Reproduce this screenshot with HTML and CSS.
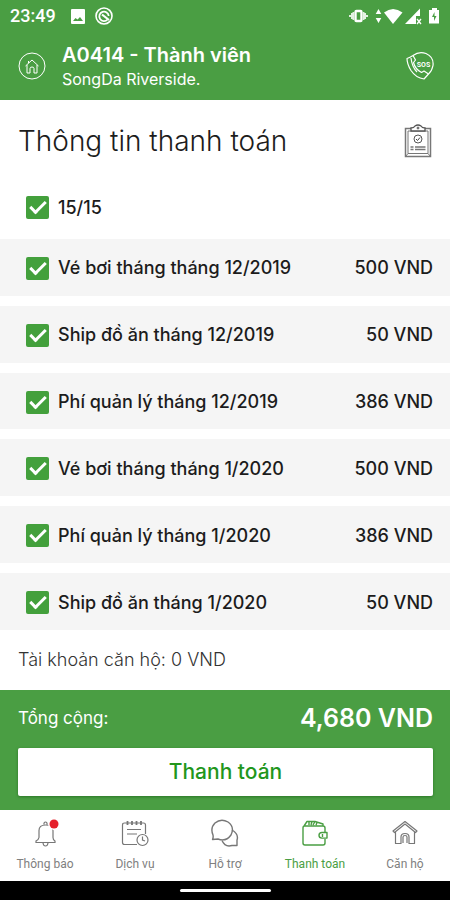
FILE: index.html
```html
<!DOCTYPE html>
<html lang="vi">
<head>
<meta charset="utf-8">
<meta name="viewport" content="width=device-width, initial-scale=1">
<title>Thông tin thanh toán</title>
<link rel="stylesheet" href="styles.css">
</head>
<body>
<header class="top">
  <div class="status">
    <span class="clock">23:49</span>
    <svg class="status-photo" width="14" height="15" viewBox="0 0 14 15"><rect width="14" height="15" rx="1" fill="#fff"/><path d="M2 12l2.500-3 2 1.500 2.500-2.500 3 4z" fill="#4a9e43"/></svg>
    <svg class="status-app" width="18" height="18" viewBox="0 0 18 18" fill="none" stroke="#fff"><circle cx="9" cy="9" r="8" stroke-width="1.600"/><path d="M12.500 12.500A4.700 4.700 0 1 1 13.700 9" stroke-width="1.800"/><path d="M7 7.500l7 5.500" stroke-width="2.200"/></svg>
    <svg class="status-right" width="94" height="18" viewBox="0 0 94 18" fill="#fff">
      <path d="M4.500 5H6v8H4.500zM3 6h1.500v6H3zM1 8h2v2H1zM15 5h1.500v8H15zM16.500 6H18v6h-1.500zM18 8h2v2h-2z" opacity=".85"/>
      <rect x="7.500" y="4" width="6" height="10" rx="1" fill="none" stroke="#fff" stroke-width="2.400"/>
      <path d="M30.500 2l2.800 5h-5.600zM30.500 16l2.800-5h-5.600z"/>
      <path d="M36 5.500Q45 -1.500 54.500 5.500L45 17z"/>
      <path d="M57 17L72 1.500V9h-4v8z"/><path d="M69 12l4 5M73 12l-4 5" stroke="#fff" stroke-width="1.300"/>
      <path d="M81 3h3V1h5v2h2v13.500H81z"/><path d="M86.500 5l-2.500 5h2v4l2.500-5h-2z" fill="#4a9e43"/>
    </svg>
  </div>
  <div class="account">
    <a class="icon-link" href="#home" aria-label="Trang chủ">
      <svg width="28" height="28" viewBox="0 0 28 28" fill="none" stroke="#fff" stroke-width="1"><circle cx="14" cy="14" r="13"/><path d="M7.500 14L14 8l6.500 6M9 13v8h3v-4.500q0-1.500 2-1.500t2 1.500V21h3v-8M10.500 11V9"/></svg>
    </a>
    <div class="who"><h1>A0414 - Thành viên</h1><p>SongDa Riverside.</p></div>
    <a class="icon-link" href="#sos" aria-label="Gọi khẩn cấp">
      <svg width="28" height="28" viewBox="0 0 28 28" fill="none" stroke="#fff" stroke-width="1.200" stroke-linejoin="round"><path d="M7 3.500Q13-1 20 1.500Q28 5 27 13.500Q26 19 22.500 22L18 27Q10 26 5 18.500Q1 12 1 6.500Q4 5.500 7 3.500z"/><path d="M7 3.500l2.500 4.500-2 2.500Q9 17 15.500 20.500L18 19l4.500 3M5 6q1 9 6 14"/><text x="17.500" y="15" text-anchor="middle" class="sos-text">SOS</text></svg>
    </a>
  </div>
</header>
<main>
  <div class="heading">
    <h2>Thông tin thanh toán</h2>
    <a class="icon-link" href="#history" aria-label="Lịch sử thanh toán">
      <svg width="28" height="34" viewBox="0 0 28 34" fill="none" stroke="#777"><path d="M1.500 4.500h25v28h-25z" stroke-width="1.500"/><path d="M4 7h20v22.500H4zM1.500 32.500L4 29.500M26.500 32.500l-2.500-3"/><path d="M7 7V4q3 0 4-2 3-2 6 0 1 2 4 2v3z" fill="#fff" stroke="#555" stroke-width="1.300"/><circle cx="14" cy="4" r="1" fill="#444"/><circle cx="14" cy="15" r="4" stroke="#555"/><path d="M12 15l1.500 1.500L16 13.500" stroke="#444"/><path d="M6.500 23h3M6.500 25.500h3M11 23h10.500M11 25.500h10.500" stroke-width="1.600"/></svg>
    </a>
  </div>
  <label class="row all"><input type="checkbox" checked><span class="name">15/15</span></label>
  <div class="fees">
    <label class="row"><input type="checkbox" checked><span class="name">Vé bơi tháng tháng 12/2019</span><span>500 VND</span></label>
    <label class="row"><input type="checkbox" checked><span class="name">Ship đồ ăn tháng 12/2019</span><span>50 VND</span></label>
    <label class="row"><input type="checkbox" checked><span class="name">Phí quản lý tháng 12/2019</span><span>386 VND</span></label>
    <label class="row"><input type="checkbox" checked><span class="name">Vé bơi tháng tháng 1/2020</span><span>500 VND</span></label>
    <label class="row"><input type="checkbox" checked><span class="name">Phí quản lý tháng 1/2020</span><span>386 VND</span></label>
    <label class="row"><input type="checkbox" checked><span class="name">Ship đồ ăn tháng 1/2020</span><span>50 VND</span></label>
  </div>
  <p class="balance">Tài khoản căn hộ: 0 VND</p>
</main>
<section class="checkout">
  <div class="total"><span>Tổng cộng:</span><strong>4,680 VND</strong></div>
  <button type="button">Thanh toán</button>
</section>
<nav class="tabs">
  <a href="#notices">
    <svg width="28" height="28" viewBox="0 0 28 28" fill="none" stroke="#777" stroke-width="1.200"><path d="M13 5.500V4q1.500-2 3 0v1.500M5 23.500h19v-1.500q-2-1-2-3.500v-7q-1-5.500-7.500-5.500T8 11.500v7Q7.500 21 5 22zM12 24q.5 3 2.500 3t2.500-3"/><circle cx="23" cy="5" r="6" fill="#fff" stroke="none"/><circle cx="23" cy="5" r="4.500" fill="#e5202b" stroke="none"/></svg>
    Thông báo
  </a>
  <a href="#services">
    <svg width="28" height="28" viewBox="0 0 28 28" fill="none" stroke="#777" stroke-width="1.200"><path d="M16 25.500H3.500q-2 0-2-2V6q0-2 2-2h19q2 0 2 2v9M6 10.500h14M6 15h10"/><path d="M6.500 2v4M11 2v4M15.500 2v4M20 2v4" stroke-width="1.800"/><circle cx="21.500" cy="21" r="5.500"/><path d="M21.500 17.500V21l2.500 1"/></svg>
    Dịch vụ
  </a>
  <a href="#support">
    <svg width="28" height="28" viewBox="0 0 28 28" fill="none" stroke="#777" stroke-width="1.400" stroke-linejoin="round"><path d="M1.500 20.500q1-2 .500-4.500Q-1 9 4 4q6-5 13-1 7 5 3 13-5 7-13 4z"/><path d="M21 11q7 4 5 10v5.500h-5q-7 2-10-5"/></svg>
    Hỗ trợ
  </a>
  <a class="current" href="#payment" aria-current="page">
    <svg width="28" height="28" viewBox="0 0 28 28" fill="none" stroke="#4a9e43" stroke-width="1.400" stroke-linejoin="round"><path d="M24 13V9q0-2-2-2H3.500Q2 7 2 9v15q0 2 2 2h18q2 0 2-2v-4M3 7l3-4.500h8L22 5v2M8 2.500V6M11 2.500L10 6M14 2.500L12 6M16 3.500L15 6"/><path d="M26 13.500h-5q-3 0-3 2.800t3 2.800h5zM21.500 15v3"/></svg>
    Thanh toán
  </a>
  <a href="#apartment">
    <svg width="28" height="28" viewBox="0 0 28 28" fill="none" stroke="#777" stroke-width="1.200" stroke-linejoin="round"><path d="M2 12L14 2.500 26 12l-1.500 1.500L14 5 3.500 13.500zM4.500 13v11.500H10V18q0-3.500 4-3.500t4 3.500v6.500h5.500V13M12 24V18q0-1.500 2-1.500t2 1.500v6"/></svg>
    Căn hộ
  </a>
</nav>
<div class="system-bar"><span></span></div>
</body>
</html>
```
FILE: styles.css
```css
* { box-sizing: border-box; }

body {
  margin: 0;
  min-height: 100vh;
  display: flex;
  flex-direction: column;
  background: #fff;
  color: #1c1c1c;
  font-family: Inter, "Noto Sans", sans-serif;
  font-size: 18px;
  line-height: 24px;
}

h1, h2, p { margin: 0; }
a { color: inherit; text-decoration: none; }
svg { display: block; flex: none; }

.top { background: #4a9e43; color: #fff; }

.status {
  display: flex;
  align-items: center;
  height: 32px;
  padding: 0 8px 0 10px;
  font: 500 18px/32px Roboto, sans-serif;
}
.status-photo { margin-left: 15px; }
.status-app { margin-left: 10px; }
.status-right { margin-left: auto; }

.account {
  display: flex;
  align-items: center;
  gap: 16px;
  height: 68px;
  padding: 0 16px 0 18px;
}
.who { flex: 1; padding-top: 2px; }
.who h1 { font-size: 20px; font-weight: 600; line-height: 24px; }
.who p { font-size: 16px; line-height: 24px; }
.sos-text { font: 700 7px Roboto, sans-serif; fill: #fff; stroke: none; }

main { flex: 1; display: flex; flex-direction: column; }

.heading {
  display: flex;
  align-items: center;
  justify-content: space-between;
  height: 80px;
  padding: 2px 18px 0;
}
.heading h2 { font-size: 28px; font-weight: 300; line-height: 36px; }

.row {
  display: flex;
  align-items: center;
  padding: 2px 17px 0 26px;
  font-weight: 500;
}
.row .name { flex: 1; }
.row input {
  appearance: none;
  width: 23px;
  height: 23px;
  margin: 0 9px 0 0;
  border-radius: 2px;
  background: #43a03c;
  display: grid;
  place-items: center;
}
.row input:checked::before {
  content: "";
  box-sizing: border-box;
  width: 16px;
  height: 9px;
  margin-bottom: 4px;
  border: solid #fff;
  border-width: 0 0 3px 3px;
  transform: rotate(-45deg);
}
.all { height: 59px; padding-bottom: 6px; }

.fees { flex: 1; display: flex; flex-direction: column; gap: 10px; }
.fees .row { flex: 1; background: #f5f5f5; }

.balance { padding: 18px; font-weight: 300; color: #333; }

.checkout { padding: 8px 17px 14px 18px; background: #4a9e43; color: #fff; }
.total {
  display: flex;
  align-items: center;
  justify-content: space-between;
  height: 40px;
  margin-bottom: 10px;
  font-size: 17px;
}
.total strong { font-size: 25px; font-weight: 600; }
.checkout button {
  display: block;
  width: 100%;
  height: 48px;
  border: 0;
  border-radius: 2px;
  background: #fff;
  box-shadow: 0 1px 3px #2c7627;
  color: #22961c;
  font: 500 21px/24px Inter, "Noto Sans", sans-serif;
}

.tabs {
  display: grid;
  grid-template-columns: repeat(5, 1fr);
  height: 71px;
  padding-top: 9px;
  color: #808080;
  font: 400 12px/16px Roboto, sans-serif;
}
.tabs a { display: flex; flex-direction: column; align-items: center; gap: 9px; }
.tabs .current { color: #4a9e43; }

.system-bar { display: flex; justify-content: center; align-items: center; height: 19px; background: #000; }
.system-bar span { width: 91px; height: 3px; border-radius: 2px; background: #fff; }
```
